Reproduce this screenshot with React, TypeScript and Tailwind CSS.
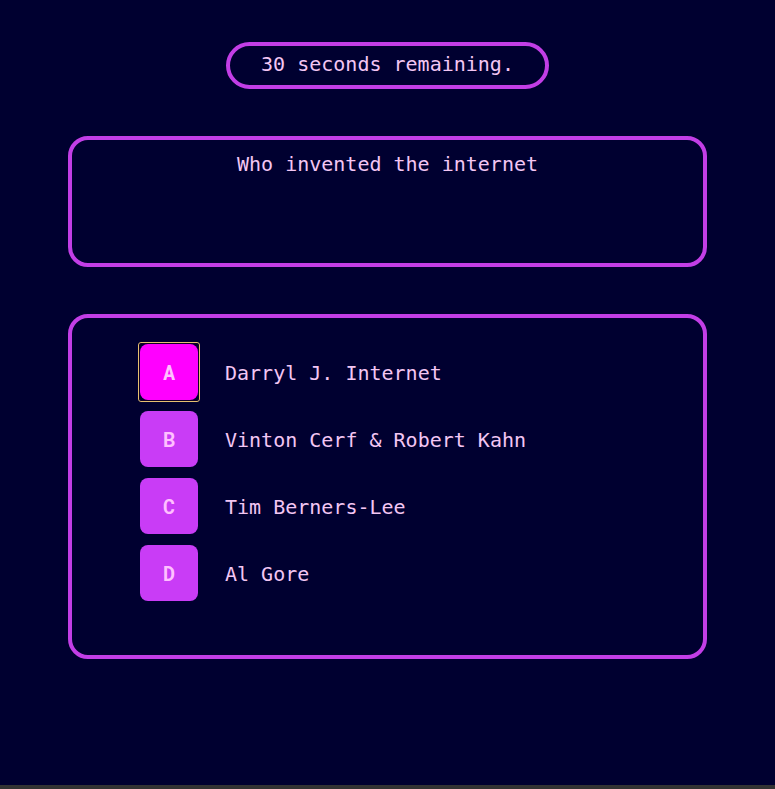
import React, { useState } from 'react';

const answers = [
  { key: 'A', text: 'Darryl J. Internet' },
  { key: 'B', text: 'Vinton Cerf & Robert Kahn' },
  { key: 'C', text: 'Tim Berners-Lee' },
  { key: 'D', text: 'Al Gore' },
];

const mono = "font-['DejaVu_Sans_Mono','Liberation_Mono',monospace]";

export default function App() {
  const [selected, setSelected] = useState('A');

  return (
    <div className="min-h-screen bg-[#333333]">
      <div className={`h-[785px] bg-[#000030] flex flex-col items-center pt-[42px] ${mono} text-[#f3c6f3]`}>
        <div className="w-[323px] h-[47px] border-4 border-[#c23ee6] rounded-full flex items-center justify-center text-[20px] leading-6 pb-[3px]">
          30 seconds remaining.
        </div>

        <div className="mt-[47px] w-[639px] h-[131px] border-4 border-[#c23ee6] rounded-[20px] pt-[12px] text-center text-[20px] leading-6">
          Who invented the internet
        </div>

        <div className="mt-[47px] w-[639px] h-[345px] border-4 border-[#c23ee6] rounded-[20px] pt-[26px] pl-[68px] flex flex-col gap-[11px]">
          {answers.map((a) => {
            const isSel = selected === a.key;
            return (
              <div key={a.key} className="flex items-center h-[56px]">
                <button
                  onClick={() => setSelected(a.key)}
                  className={`relative w-[58px] h-[56px] rounded-lg flex items-center justify-center text-[20px] font-bold font-['Roboto_Mono','DejaVu_Sans_Mono',monospace] text-[#ffc0ff] ${isSel ? 'bg-[#ff00ff]' : 'bg-[#c93cf6]'}`}
                >
                  {isSel && <span className="absolute -inset-[2px] rounded-[3px] border border-[#e6c070] bg-transparent" />}
                  {isSel && <span className="absolute -inset-[1px] rounded-[3px] border border-[#1a0020] opacity-60" />}
                  <span className="relative">{a.key}</span>
                </button>
                <span className="ml-[27px] pt-[2px] text-[20px] leading-6">{a.text}</span>
              </div>
            );
          })}
        </div>
      </div>
    </div>
  );
}
